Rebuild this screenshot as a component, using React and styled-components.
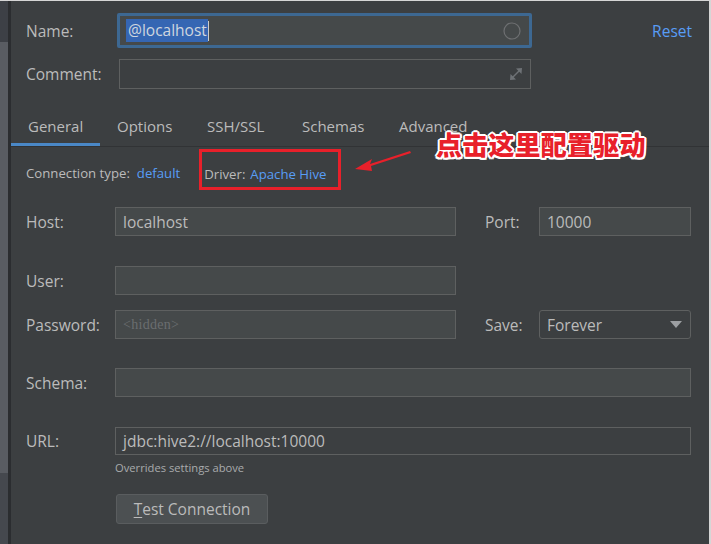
import React from 'react';
import styled, { createGlobalStyle } from 'styled-components';

const Global = createGlobalStyle`
  html, body { margin: 0; padding: 0; background: #3c3f41; overflow: hidden; }
  body { font-family: "Open Sans", "Noto Sans", sans-serif; color: #bbbbbb; }
`;

const Frame = styled.div`
  position: relative;
  display: flex;
  width: 711px;
  height: 544px;
  box-sizing: border-box;
  border-top: 1px solid #d6d6d6;
  border-right: 2px solid #d6d6d6;
  background: #3c3f41;
`;

const Sidebar = styled.div`
  width: 8px;
  display: flex;
  flex-direction: column;
  border-right: 3px solid #2b2d30;
`;

const SideSeg = styled.div`
  height: ${p => p.$h};
  flex: ${p => (p.$grow ? 1 : 'none')};
  background: ${p => p.$bg};
`;

const Main = styled.div`
  flex: 1;
  display: flex;
  flex-direction: column;
`;

const Top = styled.div`
  padding: 12px 15px 0 15px;
  display: flex;
  flex-direction: column;
  gap: 11px;
`;

const TopRow = styled.div`
  display: flex;
  align-items: center;
`;

const Label = styled.div`
  font-size: 15.5px;
  color: #bbbbbb;
  width: ${p => p.$w || 'auto'};
  flex: none;
`;

const NameBox = styled.div`
  width: 415px;
  height: 35px;
  box-sizing: border-box;
  border: 3px solid #3d6892;
  border-radius: 2px;
  background: #45494a;
  display: flex;
  align-items: center;
  padding: 0 8px 0 6px;
  margin-left: -2px;
`;

const Selected = styled.span`
  font-size: 15.5px;
  color: #cfd6df;
  background: #3566b3;
  padding: 1px 1px 2px 2px;
  line-height: 20px;
`;

const Caret = styled.span`
  width: 1px;
  height: 20px;
  background: #cccccc;
`;

const Spacer = styled.div`
  flex: 1;
`;

const Link = styled.span`
  color: #589df6;
  font-size: ${p => p.$size || '13.2px'};
`;

const CommentBox = styled.div`
  width: 412px;
  height: 30px;
  box-sizing: border-box;
  border: 1px solid #5e6060;
  background: #3c3f41;
  display: flex;
  align-items: center;
  justify-content: flex-end;
  padding-right: 6px;
`;

const TabBar = styled.div`
  margin-top: 16px;
  height: 41px;
  display: flex;
  border-bottom: 1px solid #313335;
`;

const Tab = styled.div`
  width: ${p => p.$w}px;
  box-sizing: border-box;
  padding: 4px 0 3px 17px;
  display: flex;
  align-items: center;
  font-size: 15px;
  color: #bbbbbb;
  box-shadow: ${p => (p.$active ? 'inset 0 -3px 0 #4a88c7' : 'none')};
`;

const ConnRow = styled.div`
  height: 43px;
  display: flex;
  align-items: flex-start;
  padding-left: 15px;
  font-size: 13.2px;
`;

const ConnGroup = styled.div`
  display: flex;
  align-items: center;
  padding-top: 17px;
`;

const ConnText = styled.span`
  color: #bbbbbb;
  margin-right: ${p => p.$gap || 7}px;
`;

const DriverBox = styled.div`
  margin: 2px 0 0 19px;
  height: 41px;
  box-sizing: border-box;
  border: 3px solid #e8202a;
  display: flex;
  align-items: center;
  padding: 8px 12px 0 2px;
`;

const Form = styled.div`
  padding: 17px 18px 0 15px;
  display: flex;
  flex-direction: column;
`;

const FieldRow = styled.div`
  display: grid;
  grid-template-columns: 89px 341px 29px 54px 152px;
  align-items: center;
  margin-top: ${p => p.$top || 0}px;
`;

const Input = styled.div`
  grid-column: ${p => (p.$wide ? '2 / -1' : 'auto')};
  height: ${p => p.$h || 29}px;
  box-sizing: border-box;
  border: 1px solid #5e6060;
  background: ${p => (p.$dark ? '#3c3f41' : '#45494a')};
  display: flex;
  align-items: center;
  padding-left: 7px;
  font-size: 15.5px;
  color: #bbbbbb;
`;

const Placeholder = styled.span`
  font-family: "Liberation Serif", serif;
  font-size: 14px;
  color: #6b6e70;
  letter-spacing: 0.3px;
`;

const Select = styled.div`
  height: 29px;
  box-sizing: border-box;
  border: 1px solid #5e6060;
  border-radius: 3px;
  background: #3c3f41;
  display: flex;
  align-items: center;
  justify-content: space-between;
  padding: 0 8px 0 7px;
  font-size: 15.5px;
  color: #bbbbbb;
`;

const Hint = styled.div`
  margin: 5px 0 0 89px;
  font-size: 11.2px;
  color: #a9abad;
`;

const Button = styled.div`
  margin: 19px 0 0 90px;
  width: 152px;
  height: 30px;
  box-sizing: border-box;
  border: 1px solid #5a5d5f;
  border-radius: 3px;
  background: #4c5052;
  display: flex;
  align-items: center;
  justify-content: center;
  font-size: 15.5px;
  color: #bbbbbb;
  u { text-decoration: underline; text-underline-offset: 2px; }
`;

const Callout = styled.div`
  position: absolute;
  left: 436px;
  top: 124px;
  font-family: "Noto Sans CJK SC", sans-serif;
  font-weight: 900;
  font-size: 26px;
  letter-spacing: 0.2px;
  color: #e8202a;
  text-shadow:
    2px 0 0 #fff, -2px 0 0 #fff, 0 2px 0 #fff, 0 -2px 0 #fff,
    1.5px 1.5px 0 #fff, -1.5px 1.5px 0 #fff, 1.5px -1.5px 0 #fff, -1.5px -1.5px 0 #fff;
`;

const Arrow = styled.svg`
  position: absolute;
  left: 350px;
  top: 144px;
`;

const CircleIcon = () => (
  <svg width="18" height="18" viewBox="0 0 18 18">
    <circle cx="9" cy="9" r="8" fill="none" stroke="#6e7072" strokeWidth="1.2" />
  </svg>
);

const ExpandIcon = () => (
  <svg width="16" height="16" viewBox="0 0 16 16">
    <line x1="3.5" y1="12.5" x2="12.5" y2="3.5" stroke="#6e7276" strokeWidth="1.5" />
    <polygon points="14,2 8,2.5 13.5,8" fill="#6e7276" />
    <polygon points="2,14 2.5,8 8,13.5" fill="#6e7276" />
  </svg>
);

const Caret3 = () => (
  <svg width="12" height="7" viewBox="0 0 12 7">
    <polygon points="0,0 12,0 6,7" fill="#9c9fa2" />
  </svg>
);

const tabs = [
  ['General', 89],
  ['Options', 90],
  ['SSH/SSL', 95],
  ['Schemas', 97],
  ['Advanced', 106],
];

export default function App() {
  return (
    <>
      <Global />
      <Frame>
        <Sidebar>
          <SideSeg $h="41px" $bg="#3d4046" />
          <SideSeg $grow $bg="#595c62" />
          <SideSeg $h="71px" $bg="#45484e" />
        </Sidebar>
        <Main>
          <Top>
            <TopRow>
              <Label $w="93px">Name:</Label>
              <NameBox>
                <Selected>@localhost</Selected>
                <Caret />
                <Spacer />
                <CircleIcon />
              </NameBox>
              <Spacer />
              <Link $size="15.5px" style={{ marginRight: 2 }}>Reset</Link>
            </TopRow>
            <TopRow>
              <Label $w="93px">Comment:</Label>
              <CommentBox>
                <ExpandIcon />
              </CommentBox>
            </TopRow>
          </Top>
          <TabBar>
            {tabs.map(([name, w], i) => (
              <Tab key={name} $w={w} $active={i === 0}>{name}</Tab>
            ))}
          </TabBar>
          <ConnRow>
            <ConnGroup>
              <ConnText>Connection type:</ConnText>
              <Link>default</Link>
            </ConnGroup>
            <DriverBox>
              <ConnText $gap={5}>Driver:</ConnText>
              <Link>Apache Hive</Link>
            </DriverBox>
          </ConnRow>
          <Form>
            <FieldRow>
              <Label>Host:</Label>
              <Input>localhost</Input>
              <span />
              <Label>Port:</Label>
              <Input>10000</Input>
            </FieldRow>
            <FieldRow $top={30}>
              <Label>User:</Label>
              <Input />
            </FieldRow>
            <FieldRow $top={15}>
              <Label>Password:</Label>
              <Input><Placeholder>&lt;hidden&gt;</Placeholder></Input>
              <span />
              <Label>Save:</Label>
              <Select>
                Forever
                <Caret3 />
              </Select>
            </FieldRow>
            <FieldRow $top={29}>
              <Label>Schema:</Label>
              <Input $wide />
            </FieldRow>
            <FieldRow $top={30}>
              <Label>URL:</Label>
              <Input $wide $dark $h={28}>jdbc:hive2://localhost:10000</Input>
            </FieldRow>
            <Hint>Overrides settings above</Hint>
            <Button><u>T</u>est Connection</Button>
          </Form>
        </Main>
        <Callout>点击这里配置驱动</Callout>
        <Arrow width="66" height="30" viewBox="0 0 66 30">
          <polygon points="5,24 22,14 20,19 60,6 61,8 21,21 22,26" fill="#e8202a" />
        </Arrow>
      </Frame>
    </>
  );
}
